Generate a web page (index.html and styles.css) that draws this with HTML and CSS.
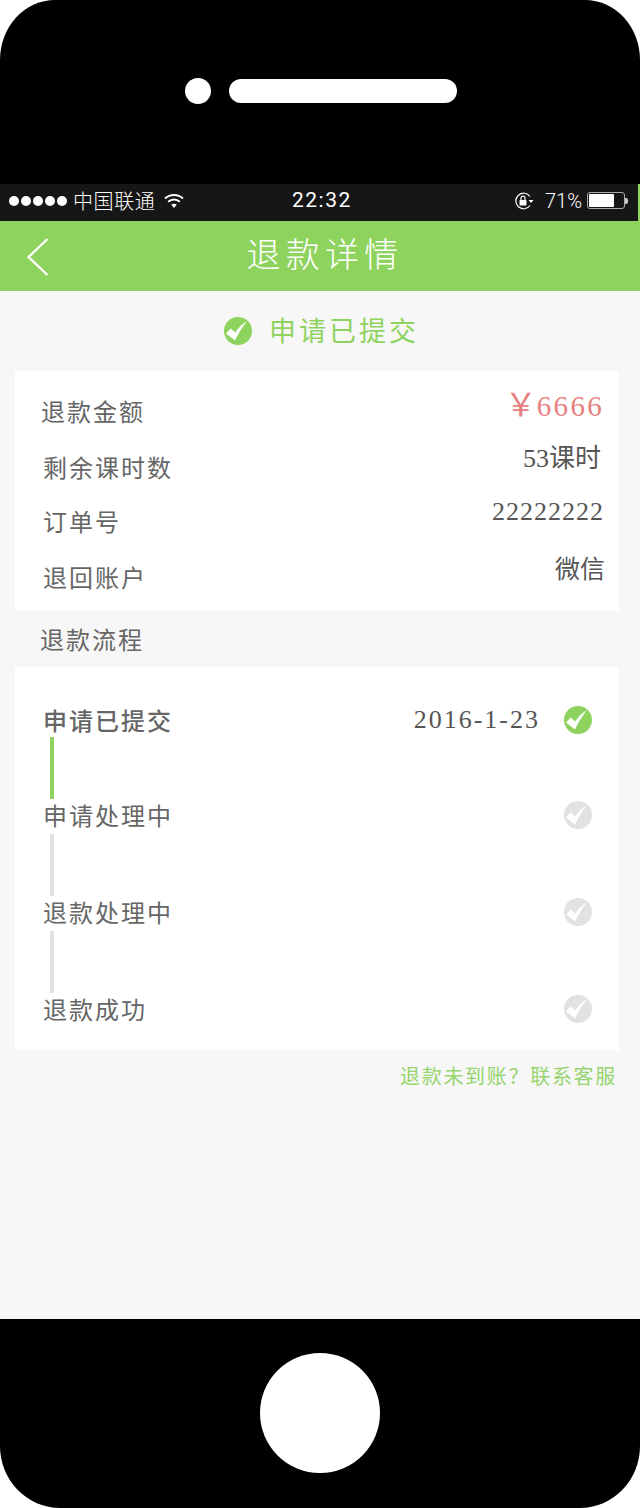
FILE: index.html
```html
<!DOCTYPE html>
<html lang="zh">
<head>
<meta charset="utf-8">
<title>退款详情</title>
<link rel="stylesheet" href="styles.css">
</head>
<body>
<div class="phone">
  <div class="top-bezel">
    <span class="camera"></span>
    <span class="speaker"></span>
  </div>
  <div class="screen">
    <div class="status">
      <span class="dots"><i></i><i></i><i></i><i></i><i></i></span>
      <span class="carrier">中国联通</span>
      <svg class="wifi" viewBox="0 0 20 16" width="20" height="16"><path d="M1 5.500C6 .8 14 .8 19 5.500" fill="none" stroke="#fff" stroke-width="2"/><path d="M4.200 8.800c3.400-3 8.200-3 11.600 0" fill="none" stroke="#fff" stroke-width="2"/><path d="M7.200 11.600c1.700-1.200 3.900-1.200 5.600 0L10 15z" fill="#fff"/></svg>
      <span class="time">22:32</span>
      <span class="status-right">
        <svg class="lock" viewBox="0 0 20 18" width="20" height="18"><path d="M16 4.500A7.800 7.800 0 1 0 16 13.500" fill="none" stroke="#fff" stroke-width="1.200"/><path d="M14.500 8h5l-2.500 3z" fill="#fff"/><rect x="5.500" y="8" width="7" height="5.500" rx=".8" fill="#fff"/><path d="M7 8V6.200a2 2 0 0 1 4 0V8" fill="none" stroke="#fff" stroke-width="1.200"/></svg>
        <span class="pct">71%</span>
        <span class="battery"><span class="battery-fill"></span></span><span class="battery-cap"></span>
      </span>
    </div>
    <header class="nav">
      <svg class="back" viewBox="0 0 24 40" width="24" height="40"><path d="M21.500 1 2.500 19 21.500 37" fill="none" stroke="#fff" stroke-width="2.300"/></svg>
      <h1 class="nav-title">退款详情</h1>
    </header>
    <main class="content">
      <div class="state">
        <svg class="check" viewBox="0 0 28 28"><circle cx="14" cy="14" r="14" fill="#8fd35f"/><path d="M2 16.500 6.700 11.500 11.300 15.500C14 11 18 7 23 4 19 9 15 15 11 23.500z" fill="#fff"/></svg>
        <span class="state-text">申请已提交</span>
      </div>
      <section class="card info">
        <div class="row row-1"><span class="label">退款金额</span><span class="value amount"><span class="yen">￥</span><span>6666</span></span></div>
        <div class="row row-2"><span class="label">剩余课时数</span><span class="value">53课时</span></div>
        <div class="row row-3"><span class="label">订单号</span><span class="value">22222222</span></div>
        <div class="row row-4"><span class="label">退回账户</span><span class="value wechat">微信</span></div>
      </section>
      <h2 class="section-title">退款流程</h2>
      <section class="card flow">
        <div class="step">
          <span class="step-name strong">申请已提交</span>
          <span class="step-date">2016-1-23</span>
          <svg class="check" viewBox="0 0 28 28"><circle cx="14" cy="14" r="14" fill="#8fd35f"/><path d="M2 16.500 6.700 11.500 11.300 15.500C14 11 18 7 23 4 19 9 15 15 11 23.500z" fill="#fff"/></svg>
        </div>
        <div class="line line-on"></div>
        <div class="step">
          <span class="step-name">申请处理中</span>
          <svg class="check" viewBox="0 0 28 28"><circle cx="14" cy="14" r="14" fill="#e2e2e2"/><path d="M2 16.500 6.700 11.500 11.300 15.500C14 11 18 7 23 4 19 9 15 15 11 23.500z" fill="#fff"/></svg>
        </div>
        <div class="line"></div>
        <div class="step">
          <span class="step-name">退款处理中</span>
          <svg class="check" viewBox="0 0 28 28"><circle cx="14" cy="14" r="14" fill="#e2e2e2"/><path d="M2 16.500 6.700 11.500 11.300 15.500C14 11 18 7 23 4 19 9 15 15 11 23.500z" fill="#fff"/></svg>
        </div>
        <div class="line"></div>
        <div class="step">
          <span class="step-name">退款成功</span>
          <svg class="check" viewBox="0 0 28 28"><circle cx="14" cy="14" r="14" fill="#e2e2e2"/><path d="M2 16.500 6.700 11.500 11.300 15.500C14 11 18 7 23 4 19 9 15 15 11 23.500z" fill="#fff"/></svg>
        </div>
      </section>
      <p class="help">退款未到账？联系客服</p>
    </main>
  </div>
  <div class="bottom-bezel"><span class="home"></span></div>
</div>
</body>
</html>
```
FILE: styles.css
```css
* { box-sizing: border-box; }
html, body { margin: 0; padding: 0; background: #fff; }
body { width: 640px; height: 1508px; overflow: hidden; font-family: "Noto Sans CJK SC", "Liberation Sans", sans-serif; }
.phone { width: 640px; height: 1507.500px; background: #000; border-radius: 55px 55px 60px 60px / 60px 60px 62px 62px; overflow: hidden; display: flex; flex-direction: column; }
.top-bezel { height: 184px; flex: none; display: flex; align-items: flex-start; padding: 78px 0 0 185px; }
.camera { width: 26px; height: 26px; border-radius: 50%; background: #fff; }
.speaker { width: 228px; height: 24px; margin: 1px 0 0 18px; border-radius: 12px; background: #fff; }
.screen { flex: none; height: 1135px; display: flex; flex-direction: column; background: #f7f7f7; }
.status { height: 37px; flex: none; background: #161616; border-right: 2px solid #8fd35f; color: #fff; display: flex; align-items: center; padding: 0 0 4px 9px; position: relative; }
.dots { display: flex; gap: 2px; }
.dots i { width: 10px; height: 10px; border-radius: 50%; background: #fff; }
.carrier { font-size: 20px; line-height: 26px; margin-left: 6px; width: 85px; letter-spacing: .6px; font-weight: 300; }
.wifi { margin-left: 6px; }
.time { position: absolute; left: 292px; top: 3px; font-family: Roboto, "Liberation Sans", sans-serif; font-size: 21px; line-height: 26px; letter-spacing: 1.500px; font-weight: 400; }
.status-right { margin-left: auto; display: flex; align-items: center; }
.lock { margin-right: 11px; }
.pct { font-family: Roboto, "Liberation Sans", sans-serif; font-weight: 300; font-size: 20px; width: 42px; }
.battery { width: 38px; height: 17px; border: 1px solid #aaa; border-radius: 3px; padding: 1px; display: block; }
.battery-fill { display: block; width: 25px; height: 13px; background: #fff; border-radius: 1px; }
.battery-cap { width: 3px; height: 6px; background: #ccc; margin: 0 10px 0 0; border-radius: 0 2px 2px 0; }
.nav { height: 70px; flex: none; background: #8fd35f; position: relative; display: flex; align-items: center; justify-content: center; }
.back { position: absolute; left: 26px; top: 17px; }
.nav-title { margin: 0 0 6px 10px; color: #fff; font-size: 34px; line-height: 44px; font-weight: 300; letter-spacing: 5.300px; }
.content { flex: 1; display: flex; flex-direction: column; padding: 0 21px 0 15px; }
.state { height: 80px; flex: none; display: flex; align-items: center; justify-content: center; padding-left: 9px; }
.check { width: 28px; height: 28px; flex: none; }
.state-text { margin: 0 0 2px 17px; color: #8fd35f; font-size: 27px; letter-spacing: 3px; line-height: 36px; }
.card { background: #fff; }
.info { height: 240px; flex: none; display: flex; flex-direction: column; }
.row { display: flex; justify-content: space-between; align-items: flex-start; flex: none; padding: 0 15px 0 26px; }
.row-1 { height: 57px; padding-top: 24px; }
.row-2 { height: 55px; padding-top: 24px; }
.row-3 { height: 56px; padding-top: 23px; }
.row-4 { height: 56px; padding-top: 24px; }
.label { color: #666; font-size: 24px; line-height: 32px; letter-spacing: 2px; display: block; }
.row-2 .label, .row-3 .label, .row-4 .label { margin-left: 2px; margin-top: -1px; }
.row-4 .label { margin-top: -2px; }
.value { color: #555; font-family: "Liberation Serif", "Noto Sans CJK SC", serif; font-size: 26px; line-height: 32px; letter-spacing: 1px; margin-top: -9px; }
.row-2 .value { margin-right: 3px; letter-spacing: 0; }
.row-3 .value { margin-top: -10px; }
.row-4 .value { font-size: 25px; letter-spacing: 0; margin-right: -1px; }
.amount { color: #e88080; font-size: 29px; letter-spacing: 2.300px; display: flex; align-items: baseline; }
.yen { font-family: "Noto Sans CJK SC", sans-serif; font-size: 32px; letter-spacing: 0; }
.section-title { margin: 0; height: 56px; flex: none; padding: 12px 0 0 25px; color: #666; font-size: 24px; line-height: 32px; letter-spacing: 2px; font-weight: 400; }
.flow { height: 383px; flex: none; padding: 37px 27px 0 28px; display: flex; flex-direction: column; }
.step { height: 32px; flex: none; display: flex; align-items: center; margin-bottom: 3px; }
.step:first-child { margin-bottom: 1px; }
.step-name { color: #666; font-size: 24px; line-height: 32px; letter-spacing: 2px; margin-right: auto; }
.step-name.strong { font-weight: 500; }
.step-date { color: #555; font-family: "Liberation Serif", serif; font-size: 26px; letter-spacing: 2px; margin-right: 24px; }
.line { width: 4px; height: 62px; flex: none; margin-left: 7px; background: #e2e2e2; }
.line-on { background: #8fd35f; }
.help { margin: 13px 2px 0 0; text-align: right; color: #96d56d; font-size: 20px; line-height: 26px; letter-spacing: 1.700px; }
.bottom-bezel { flex: 1; display: flex; justify-content: center; align-items: flex-start; padding-top: 34px; }
.home { width: 120px; height: 120px; border-radius: 50%; background: #fff; }
```
